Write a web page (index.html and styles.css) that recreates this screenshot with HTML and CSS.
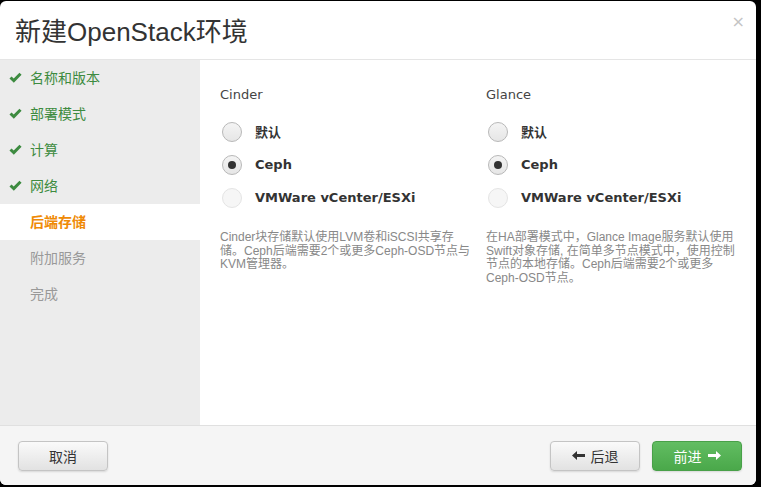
FILE: index.html
```html
<!DOCTYPE html>
<html lang="zh">
<head>
<meta charset="utf-8">
<title>新建OpenStack环境</title>
<link rel="stylesheet" href="styles.css">
</head>
<body>
<div class="modal">
  <div class="modal-header">
    <h3 class="modal-title">新建OpenStack环境</h3>
    <span class="close">×</span>
  </div>
  <div class="modal-body">
    <ul class="steps">
      <li class="step done"><svg class="check" width="13" height="11" viewBox="0 0 13 11"><polyline points="1.5,5.5 4.8,8.6 11.5,1.8" fill="none" stroke="#3d8b40" stroke-width="3"/></svg>名称和版本</li>
      <li class="step done"><svg class="check" width="13" height="11" viewBox="0 0 13 11"><polyline points="1.5,5.5 4.8,8.6 11.5,1.8" fill="none" stroke="#3d8b40" stroke-width="3"/></svg>部署模式</li>
      <li class="step done"><svg class="check" width="13" height="11" viewBox="0 0 13 11"><polyline points="1.5,5.5 4.8,8.6 11.5,1.8" fill="none" stroke="#3d8b40" stroke-width="3"/></svg>计算</li>
      <li class="step done"><svg class="check" width="13" height="11" viewBox="0 0 13 11"><polyline points="1.5,5.5 4.8,8.6 11.5,1.8" fill="none" stroke="#3d8b40" stroke-width="3"/></svg>网络</li>
      <li class="step active">后端存储</li>
      <li class="step todo">附加服务</li>
      <li class="step todo">完成</li>
    </ul>
    <div class="pane">
      <div class="col">
        <div class="col-title">Cinder</div>
        <div class="radio-row"><span class="radio"></span><span class="radio-label">默认</span></div>
        <div class="radio-row"><span class="radio checked"></span><span class="radio-label">Ceph</span></div>
        <div class="radio-row"><span class="radio disabled"></span><span class="radio-label">VMWare vCenter/ESXi</span></div>
        <p class="desc">Cinder块存储默认使用LVM卷和iSCSI共享存储。Ceph后端需要2个或更多Ceph-OSD节点与KVM管理器。</p>
      </div>
      <div class="col">
        <div class="col-title">Glance</div>
        <div class="radio-row"><span class="radio"></span><span class="radio-label">默认</span></div>
        <div class="radio-row"><span class="radio checked"></span><span class="radio-label">Ceph</span></div>
        <div class="radio-row"><span class="radio disabled"></span><span class="radio-label">VMWare vCenter/ESXi</span></div>
        <p class="desc">在HA部署模式中，Glance Image服务默认使用Swift对象存储, 在简单多节点模式中，使用控制节点的本地存储。Ceph后端需要2个或更多Ceph-OSD节点。</p>
      </div>
    </div>
  </div>
  <div class="modal-footer">
    <button class="btn">取消</button>
    <div class="footer-right">
      <button class="btn"><svg class="arrow" width="13" height="9" viewBox="0 0 13 9"><polygon points="0,4.5 5,0 5,3 13,3 13,6 5,6 5,9" fill="#333"/></svg>后退</button>
      <button class="btn btn-success">前进<svg class="arrow right" width="13" height="9" viewBox="0 0 13 9"><polygon points="13,4.5 8,0 8,3 0,3 0,6 8,6 8,9" fill="#fff"/></svg></button>
    </div>
  </div>
</div>
</body>
</html>
```
FILE: styles.css
```css
html, body {
  margin: 0;
  padding: 0;
  background: #000;
  width: 761px;
  height: 487px;
  overflow: hidden;
}
body {
  font-family: "DejaVu Sans", "Noto Sans CJK SC", sans-serif;
  color: #333;
}
.modal {
  margin-top: 1px;
  width: 756px;
  height: 484px;
  background: #fff;
  border-radius: 6px;
  overflow: hidden;
  display: flex;
  flex-direction: column;
}
.modal-header {
  height: 58px;
  border-bottom: 1px solid #e5e5e5;
  display: flex;
  align-items: center;
  justify-content: space-between;
  padding: 0 15px 0 15px;
  flex: none;
}
.modal-title {
  margin: 0;
  font-family: "Liberation Sans", "Noto Sans CJK SC", sans-serif;
  font-size: 26px;
  font-weight: normal;
  color: #333;
  position: relative;
  top: -1px;
}
.close {
  font-family: "DejaVu Sans", sans-serif;
  font-size: 16px;
  color: #c4c4c4;
  position: relative;
  top: -9px;
  right: -4px;
}
.modal-body {
  flex: 1;
  display: flex;
  min-height: 0;
}
.steps {
  list-style: none;
  margin: 0;
  padding: 0;
  width: 200px;
  background: #ececec;
  flex: none;
}
.step {
  height: 36px;
  box-sizing: border-box;
  padding-bottom: 2px;
  display: flex;
  align-items: center;
  padding-left: 30px;
  font-size: 14px;
  font-family: "Noto Sans CJK SC", sans-serif;
  position: relative;
}
.step .check {
  position: absolute;
  left: 9px;
  top: 12px;
}
.step.done { color: #3d8b40; }
.step.active {
  background: #fff;
  color: #ef8a05;
  font-weight: bold;
}
.step.todo { color: #999; }
.pane {
  flex: 1;
  display: grid;
  grid-template-columns: 255px 250px;
  column-gap: 11px;
  padding: 26px 20px 0 20px;
  align-content: start;
}
.col-title {
  font-size: 13px;
  line-height: 18px;
  color: #444;
  margin-bottom: 11px;
}
.radio-row {
  height: 33px;
  display: flex;
  align-items: center;
}
.radio {
  width: 18px;
  height: 18px;
  border-radius: 50%;
  border: 1px solid #b8b8b8;
  background: linear-gradient(#f4f4f4, #e6e6e6);
  box-sizing: content-box;
  margin-left: 2px;
  margin-right: 13px;
  position: relative;
  flex: none;
}
.radio.checked::after {
  content: "";
  position: absolute;
  left: 5px;
  top: 5px;
  width: 8px;
  height: 8px;
  border-radius: 50%;
  background: #333;
}
.radio.disabled {
  border-color: #e4e4e4;
  background: #f6f6f6;
}
.radio-label {
  font-size: 13px;
  font-weight: bold;
  color: #333;
  font-family: "DejaVu Sans", "Noto Sans CJK SC", sans-serif;
}
.desc {
  margin: 17px 0 0 0;
  font-size: 12px;
  line-height: 13.5px;
  color: #888;
  font-family: "Liberation Sans", "Noto Sans CJK SC", sans-serif;
}
.modal-footer {
  flex: none;
  height: 59px;
  border-top: 1px solid #e0e0e0;
  background: #f5f5f5;
  display: flex;
  align-items: center;
  justify-content: space-between;
  padding: 0 14px 0 18px;
}
.footer-right {
  display: flex;
  gap: 12px;
}
.btn {
  width: 90px;
  height: 30px;
  border: 1px solid #c4c4c4;
  border-radius: 4px;
  background: linear-gradient(#fafafa, #e2e2e2);
  box-shadow: 0 1px 2px rgba(0,0,0,0.12);
  font-family: "Noto Sans CJK SC", sans-serif;
  font-size: 14px;
  color: #333;
  display: flex;
  align-items: center;
  justify-content: center;
  gap: 6px;
  padding: 0;
}
.btn-success {
  background: linear-gradient(#62bd62, #4aa84a);
  border-color: #48a048;
  color: #fff;
}
```
